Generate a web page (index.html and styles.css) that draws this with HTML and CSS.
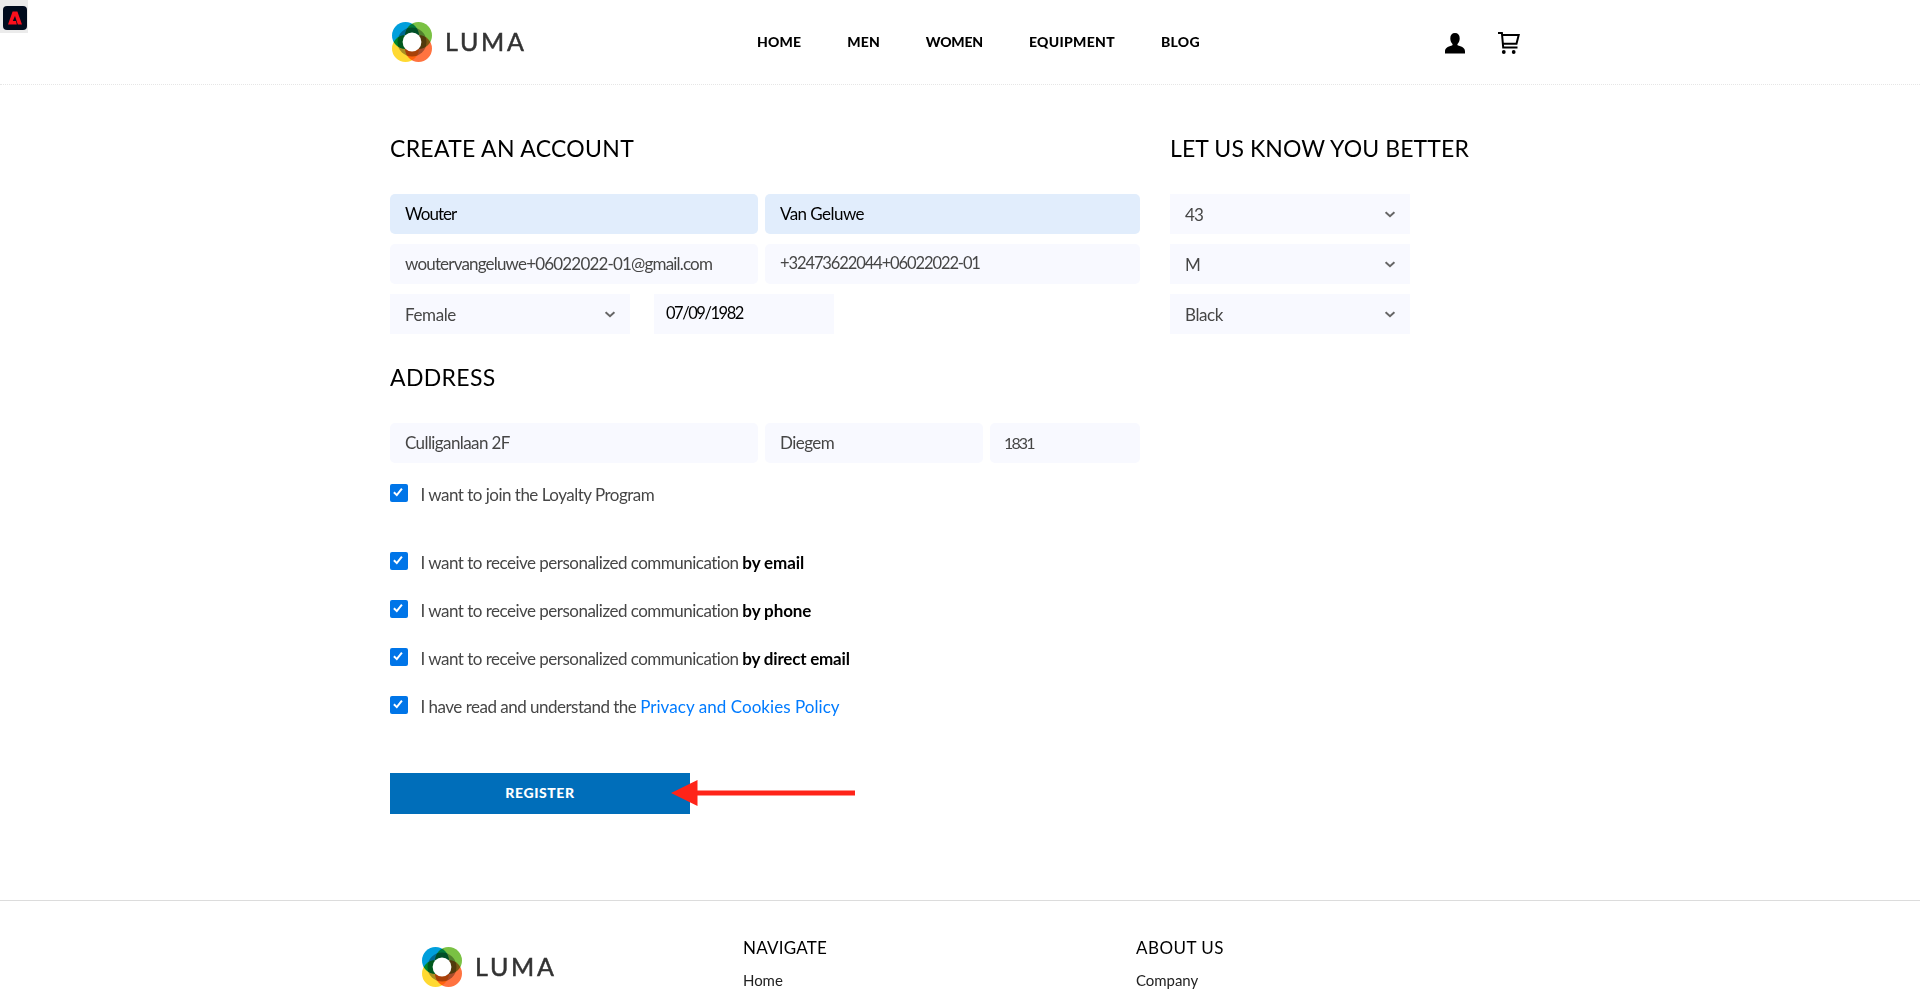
FILE: index.html
```html
<!DOCTYPE html>
<html lang="en">
<head>
<meta charset="utf-8">
<title>Luma - Create an account</title>
<link rel="stylesheet" href="styles.css">
</head>
<body>
<svg class="defs" width="0" height="0" aria-hidden="true">
  <symbol id="luma-mark" viewBox="0 0 40 40">
    <g class="petals">
      <circle cx="13.5" cy="13.500" r="13.500" fill="#009fdc"/>
      <circle cx="26.500" cy="13.500" r="13.500" fill="#7ac143"/>
      <circle cx="13.500" cy="26.500" r="13.500" fill="#ffd932"/>
      <circle cx="26.500" cy="26.500" r="13.500" fill="#ff7340"/>
      <circle cx="20" cy="20" r="14.500" fill="#a8a8a8"/>
    </g>
    <circle cx="20" cy="20" r="9.400" fill="#fff"/>
  </symbol>
  <symbol id="check" viewBox="0 0 18 18"><path d="M3.900 8.200 6.800 11.100 11.900 4.600" fill="none" stroke="#fff" stroke-width="2"/></symbol>
  <symbol id="chevron" viewBox="0 0 10 7"><path d="M.6 1.200 5 5.200 9.400 1.200" fill="none" stroke="#666" stroke-width="2"/></symbol>
</svg>

<div class="badge">
  <svg width="24" height="24" viewBox="0 0 24 24"><rect width="24" height="24" rx="4" fill="#000b1d"/><path d="M9.600 5.500h4.800L19 18.500h-4.200L12 10l-2.200 5h3.200l.8 3.500H5z" fill="#fa0f1c"/></svg>
</div>

<header class="header">
  <div class="wrap header-row">
    <a class="logo"><svg class="mark"><use href="#luma-mark"/></svg><span>LUMA</span></a>
    <nav class="nav"><a>HOME</a><a class="n-men">MEN</a><a class="n-women">WOMEN</a><a class="n-eq">EQUIPMENT</a><a class="n-blog">BLOG</a></nav>
    <div class="tools">
      <svg width="20" height="21" viewBox="0 0 20 21"><path d="M10 0c3 0 4.700 2 4.700 5.300 0 2.500-.8 4.500-2 5.500-.5.500-.4 1.400.4 1.700 4.500 1.100 6.900 2.600 6.900 6V20.500H0v-2c0-3.400 2.400-4.900 6.900-6 .8-.3.900-1.200.4-1.700-1.200-1-2-3-2-5.500C5.300 2 7 0 10 0z"/></svg>
      <svg width="22" height="22" viewBox="0 0 22 22"><g fill="none" stroke="#000" stroke-width="2"><path d="M0 1h3.900l1.300 14.500H19.500"/><path d="M4.200 3H20.700L18.500 11.800H5"/></g><circle cx="5.800" cy="20" r="1.900"/><circle cx="15.700" cy="20" r="1.900"/></svg>
    </div>
  </div>
</header>

<main class="wrap main">
  <section class="account">
    <h2 class="h-create">CREATE AN ACCOUNT</h2>
    <div class="row"><div class="field auto first wouter">Wouter</div><div class="field auto rest">Van Geluwe</div></div>
    <div class="row"><div class="field first email">woutervangeluwe+06022022-01@gmail.com</div><div class="field rest phone">+32473622044+06022022-01</div></div>
    <div class="row personal"><div class="select female"><span>Female</span><svg><use href="#chevron"/></svg></div><div class="date">07/09/1982</div></div>
    <h2 class="h-address">ADDRESS</h2>
    <div class="row"><div class="field first street">Culliganlaan 2F</div><div class="field city">Diegem</div><div class="field zip">1831</div></div>
    <div class="checks">
      <label class="check loyalty"><svg class="box"><use href="#check"/></svg><span>I want to join the Loyalty Program</span></label>
      <label class="check"><svg class="box"><use href="#check"/></svg><span>I want to receive personalized communication <b>by email</b></span></label>
      <label class="check"><svg class="box"><use href="#check"/></svg><span>I want to receive personalized communication <b>by phone</b></span></label>
      <label class="check"><svg class="box"><use href="#check"/></svg><span>I want to receive personalized communication <b class="direct">by direct email</b></span></label>
      <label class="check"><svg class="box"><use href="#check"/></svg><span>I have read and understand the <a>Privacy and Cookies Policy</a></span></label>
    </div>
    <div class="action">
      <button class="register">REGISTER</button>
      <svg class="arrow" viewBox="0 0 184 26"><path d="M0 13 26.500 0V10.500H184V15.500H26.500V26z" fill="#ff2419"/></svg>
    </div>
  </section>
  <section class="better">
    <h2 class="h-better">LET US KNOW YOU BETTER</h2>
    <div class="row"><div class="select"><span class="num">43</span><svg><use href="#chevron"/></svg></div></div>
    <div class="row"><div class="select"><span>M</span><svg><use href="#chevron"/></svg></div></div>
    <div class="row"><div class="select"><span class="black">Black</span><svg><use href="#chevron"/></svg></div></div>
  </section>
</main>

<footer class="footer">
  <div class="footer-row">
    <a class="logo"><svg class="mark"><use href="#luma-mark"/></svg><span>LUMA</span></a>
    <div class="links"><h3>NAVIGATE</h3><a>Home</a></div>
    <div class="links about"><h3>ABOUT US</h3><a>Company</a></div>
  </div>
</footer>
</body>
</html>
```
FILE: styles.css
```css
* { box-sizing: border-box; }
html, body { margin: 0; height: 1001px; overflow: hidden; }
body { font: 17px/20px Lato, sans-serif; color: #464646; background: #fff; }
h2, h3 { margin: 0; font-weight: 400; color: #000; }
svg { display: block; flex: none; }
.defs { position: absolute; }
.petals { isolation: isolate; }
.petals circle { mix-blend-mode: multiply; }

.badge { position: absolute; left: 0; top: 0; width: 28px; height: 33px; padding: 6px 0 0 3px; background: #ebebeb; }

.wrap { width: 1140px; margin: 0 auto; }
.header { height: 85px; border-bottom: 1px dotted #e6e6e6; }
.header-row { display: flex; height: 84px; align-items: center; }
.logo { display: flex; flex: none; align-items: center; height: 40px; width: 367px; padding-left: 2px; color: #333; }
.mark { width: 40px; height: 40px; margin-right: 13px; }
.logo span { padding-bottom: 1px; font-size: 25px; line-height: 39px; letter-spacing: 2.7px; -webkit-text-stroke: .5px #333; }
.nav { display: flex; gap: 46px; width: 688px; font-size: 14px; font-weight: 900; color: #000; letter-spacing: .2px; }
.n-men { letter-spacing: .1px; }
.n-women { letter-spacing: -.2px; }
.n-eq { letter-spacing: .3px; }
.n-blog { letter-spacing: .3px; }
.tools { display: flex; align-items: center; gap: 33px; padding-top: 2px; }

.main { display: flex; height: 815px; padding-top: 48px; }
.account { width: 750px; margin-right: 30px; }
h2 { height: 61px; font-size: 23px; line-height: 30px; letter-spacing: .3px; }
.h-better { letter-spacing: .12px; white-space: nowrap; }
.h-address { margin-top: 28px; letter-spacing: .35px; }
.row { display: flex; gap: 7px; height: 40px; margin-bottom: 10px; }
.field, .select, .date { height: 40px; background: #f8f9ff; line-height: 39px; white-space: nowrap; }
.field { padding-left: 15px; border-radius: 5px; letter-spacing: -.55px; }
.auto { background: #e1edfc; color: #000; }
.first { width: 368px; }
.rest { width: 375px; }
.city { width: 218px; }
.wouter { letter-spacing: -.95px; }
.zip { width: 150px; padding-left: 14px; font-size: 16px; letter-spacing: -1.9px; }
.email { letter-spacing: -.82px; }
.phone { font-size: 16.5px; letter-spacing: -1.1px; }
.street { letter-spacing: -.6px; }
.select { display: flex; align-items: center; justify-content: space-between; width: 240px; padding: 0 15px; letter-spacing: -.4px; }
.select svg { width: 10px; height: 7px; }
.num { letter-spacing: -.86px; }
.personal { gap: 24px; }
.date { width: 180px; padding-left: 12px; color: #000; font-size: 16.5px; letter-spacing: -1.45px; }

.checks { display: flex; flex-direction: column; gap: 30px; margin-top: 21px; }
.check { display: flex; height: 18px; white-space: nowrap; letter-spacing: -.51px; line-height: 21px; }
.check span { padding: 0 0 0 12.5px; }
.check b { color: #000; letter-spacing: -.1px; }
.check .direct { letter-spacing: -.2px; }
.check a { color: #007bff; letter-spacing: .05px; }
.box { width: 18px; height: 18px; border-radius: 2px; background: #0075e8; }
.loyalty { margin-bottom: 20px; }

.action { position: relative; margin-top: 59px; }
.register { display: block; width: 300px; height: 41px; padding: 0 0 2px; border: 0; background: #006eba; color: #fff; font: 900 14px/39px Lato, sans-serif; letter-spacing: .6px; }
.arrow { position: absolute; left: 281px; top: 7px; width: 184px; height: 26px; }

.footer { border-top: 1px solid #dcdcdc; }
.footer-row { display: flex; width: 1080px; margin: 0 auto; padding-top: 36px; }
.footer .logo { width: 323px; margin-top: 10px; }
.links { flex: none; width: 393px; }
.links.about { width: 300px; }
h3 { font-size: 17px; line-height: 21px; letter-spacing: .2px; }
.about h3 { letter-spacing: .45px; }
.links a { display: block; margin-top: 13px; font-size: 15px; line-height: 19px; color: #222; letter-spacing: -.05px; }
```
